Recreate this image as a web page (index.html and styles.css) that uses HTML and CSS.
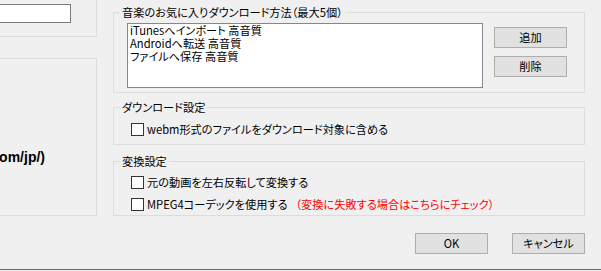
FILE: index.html
```html
<!DOCTYPE html>
<html lang="ja">
<head>
  <meta charset="UTF-8">
  <title>設定</title>
  <link rel="stylesheet" href="styles.css">
</head>
<body>
  <div class="window">
    <div class="panes">
      <div class="left-pane">
        <div class="left-box top-box">
          <div class="url-field"></div>
        </div>
        <div class="left-box info-box">
          <div class="info-line"><span class="info-text">(https://www.youtube.com/jp/)</span></div>
        </div>
      </div>

      <div class="right-pane">
        <div class="group favorites">
          <div class="group-title">音楽のお気に入りダウンロード方法（最大5個）</div>
          <div class="fav-body">
            <div class="listbox">
              <div class="list-item">iTunesへインポート 高音質</div>
              <div class="list-item">Androidへ転送 高音質</div>
              <div class="list-item">ファイルへ保存 高音質</div>
            </div>
            <div class="side-buttons">
              <button class="btn">追加</button>
              <button class="btn">削除</button>
            </div>
          </div>
        </div>

        <div class="group download">
          <div class="group-title">ダウンロード設定</div>
          <label class="check-row first">
            <span class="checkbox"></span>
            <span>webm形式のファイルをダウンロード対象に含める</span>
          </label>
        </div>

        <div class="group convert">
          <div class="group-title">変換設定</div>
          <label class="check-row first">
            <span class="checkbox"></span>
            <span>元の動画を左右反転して変換する</span>
          </label>
          <label class="check-row">
            <span class="checkbox"></span>
            <span>MPEG4コーデックを使用する</span>
            <span class="warn">（変換に失敗する場合はこちらにチェック）</span>
          </label>
        </div>
      </div>
    </div>

    <div class="dialog-buttons">
      <button class="btn">OK</button>
      <button class="btn">キャンセル</button>
    </div>
    <div class="status-line"></div>
  </div>
</body>
</html>
```

FILE: styles.css
```css
* {
  box-sizing: border-box;
}

body {
  margin: 0;
  background-color: #f0f0f0;
  font-family: "Noto Sans CJK JP", sans-serif;
  font-size: 11.2px;
  font-feature-settings: "palt";
  color: #000;
  overflow: hidden;
}

.window {
  width: 601px;
  height: 271px;
  display: flex;
  flex-direction: column;
}

.panes {
  display: flex;
  gap: 16px;
  height: 216px;
}

/* left pane, mostly scrolled off screen */
.left-pane {
  width: 97px;
  display: flex;
  flex-direction: column;
}

.left-box {
  border: 1px solid #dcdcdc;
  border-left: none;
}

.top-box {
  height: 37px;
  border-top: none;
  padding-top: 4px;
}

.url-field {
  width: 71px;
  height: 19px;
  background-color: #fff;
  border: 1px solid #7a7a7a;
  border-left: none;
}

.info-box {
  margin-top: 21px;
  height: 158px;
  padding-top: 91px;
  padding-right: 51px;
}

.info-line {
  display: flex;
  justify-content: flex-end;
  overflow: hidden;
  white-space: nowrap;
  line-height: 15px;
}

.info-text {
  font-family: "Liberation Sans", sans-serif;
  font-weight: bold;
  font-size: 14px;
}

/* right pane */
.right-pane {
  width: 472px;
  padding-top: 12px;
  display: flex;
  flex-direction: column;
}

.group {
  border: 1px solid #dcdcdc;
}

.group-title {
  width: fit-content;
  height: 14px;
  line-height: 14px;
  margin: -8px 0 0 6px;
  padding: 0 2px;
  background-color: #f0f0f0;
  white-space: nowrap;
}

.favorites {
  height: 81px;
}

.download {
  height: 38px;
  margin-top: 14px;
}

.convert {
  height: 55px;
  margin-top: 16px;
}

.fav-body {
  display: flex;
  margin-top: 4px;
  padding-left: 13px;
}

.listbox {
  width: 356px;
  height: 65px;
  background-color: #fff;
  border: 1px solid #828790;
  padding: 0 2px;
}

.list-item {
  line-height: 13px;
  white-space: nowrap;
}

.side-buttons {
  display: flex;
  flex-direction: column;
  gap: 8px;
  margin-left: 11px;
  padding-top: 4px;
}

.btn {
  width: 73px;
  height: 21px;
  padding: 0;
  background-color: #e1e1e1;
  border: 1px solid #adadad;
  font: inherit;
  line-height: 19px;
  color: #000;
}

.check-row {
  display: flex;
  align-items: center;
  height: 13px;
  margin-top: 9px;
  padding-left: 17px;
  line-height: 13px;
  white-space: nowrap;
}

.convert .check-row.first {
  margin-top: 8px;
}

.checkbox {
  width: 13px;
  height: 13px;
  margin-right: 3px;
  background-color: #fff;
  border: 1px solid #333;
  flex-shrink: 0;
}

.warn {
  color: #ff0000;
  margin-left: 8px;
}

.dialog-buttons {
  display: flex;
  justify-content: flex-end;
  gap: 24px;
  margin-top: 17px;
  padding-right: 16px;
}

.status-line {
  margin-top: 15px;
  height: 1px;
  background-color: #696969;
}
```
